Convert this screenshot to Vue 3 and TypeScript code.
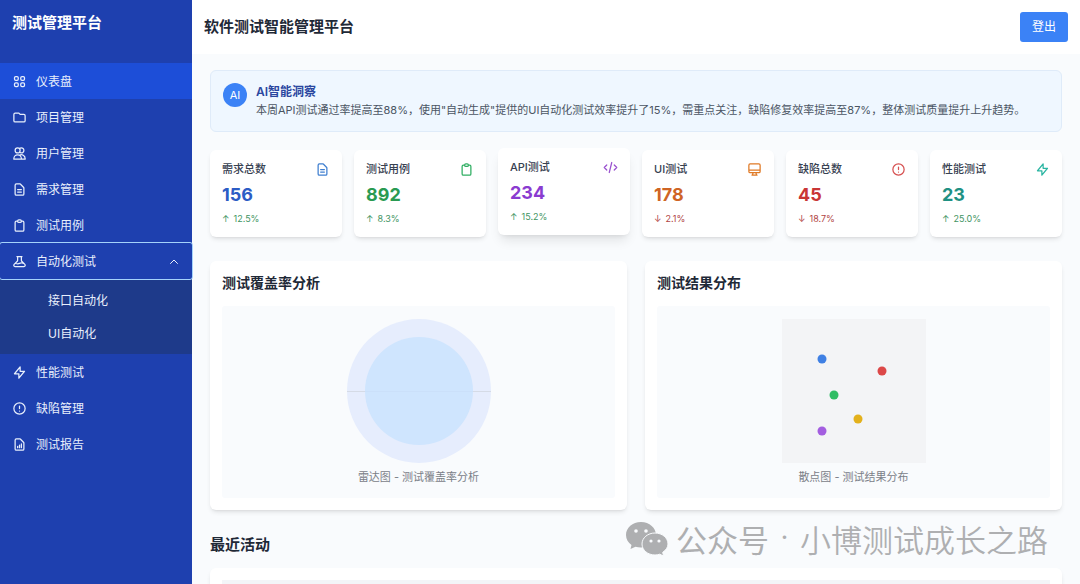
<script setup lang="ts">
interface NavItem {
  label: string
  icon: string
  active?: boolean
  children?: string[]
}

interface Stat {
  label: string
  value: string
  up: boolean
  change: string
  icon: string
  tone: string
  raised?: boolean
}

const icons: Record<string, string> = {
  grid: 'M4 6a2 2 0 012-2h2a2 2 0 012 2v2a2 2 0 01-2 2H6a2 2 0 01-2-2V6zM14 6a2 2 0 012-2h2a2 2 0 012 2v2a2 2 0 01-2 2h-2a2 2 0 01-2-2V6zM4 16a2 2 0 012-2h2a2 2 0 012 2v2a2 2 0 01-2 2H6a2 2 0 01-2-2v-2zM14 16a2 2 0 012-2h2a2 2 0 012 2v2a2 2 0 01-2 2h-2a2 2 0 01-2-2v-2z',
  folder: 'M3 7v10a2 2 0 002 2h14a2 2 0 002-2V9a2 2 0 00-2-2h-6l-2-2H5a2 2 0 00-2 2z',
  users: 'M12 4.354a4 4 0 110 5.292M15 21H3v-1a6 6 0 0112 0v1zm0 0h6v-1a6 6 0 00-9-5.197M13 7a4 4 0 11-8 0 4 4 0 018 0z',
  document: 'M9 12h6m-6 4h6m2 5H7a2 2 0 01-2-2V5a2 2 0 012-2h5.586a1 1 0 01.707.293l5.414 5.414a1 1 0 01.293.707V19a2 2 0 01-2 2z',
  clipboard: 'M9 5H7a2 2 0 00-2 2v12a2 2 0 002 2h10a2 2 0 002-2V7a2 2 0 00-2-2h-2M9 5a2 2 0 002 2h2a2 2 0 002-2M9 5a2 2 0 012-2h2a2 2 0 012 2',
  flask: 'M19.428 15.428a2 2 0 00-1.022-.547l-2.387-.477a6 6 0 00-3.86.517l-.318.158a6 6 0 01-3.86.517L6.05 15.21a2 2 0 00-1.806.547M8 4h8l-1 1v5.172a2 2 0 00.586 1.414l5 5c1.26 1.26.367 3.414-1.415 3.414H4.828c-1.782 0-2.674-2.154-1.414-3.414l5-5A2 2 0 009 10.172V5L8 4z',
  bolt: 'M13 10V3L4 14h7v7l9-11h-7z',
  alert: 'M12 8v4m0 4h.01M21 12a9 9 0 11-18 0 9 9 0 0118 0z',
  report: 'M9 17v-2m3 2v-4m3 4v-6m2 10H7a2 2 0 01-2-2V5a2 2 0 012-2h5.586a1 1 0 01.707.293l5.414 5.414a1 1 0 01.293.707V19a2 2 0 01-2 2z',
  code: 'M10 20l4-16m4 4l4 4-4 4M6 16l-4-4 4-4',
  monitor: 'M9.75 17L9 20l-1 1h8l-1-1-.75-3M3 13h18M5 17h14a2 2 0 002-2V5a2 2 0 00-2-2H5a2 2 0 00-2 2v10a2 2 0 002 2z',
}

const nav: NavItem[] = [
  { label: '仪表盘', icon: 'grid', active: true },
  { label: '项目管理', icon: 'folder' },
  { label: '用户管理', icon: 'users' },
  { label: '需求管理', icon: 'document' },
  { label: '测试用例', icon: 'clipboard' },
  { label: '自动化测试', icon: 'flask', children: ['接口自动化', 'UI自动化'] },
  { label: '性能测试', icon: 'bolt' },
  { label: '缺陷管理', icon: 'alert' },
  { label: '测试报告', icon: 'report' },
]

const stats: Stat[] = [
  { label: '需求总数', value: '156', up: true, change: '12.5%', icon: 'document', tone: 'blue' },
  { label: '测试用例', value: '892', up: true, change: '8.3%', icon: 'clipboard', tone: 'green' },
  { label: 'API测试', value: '234', up: true, change: '15.2%', icon: 'code', tone: 'purple', raised: true },
  { label: 'UI测试', value: '178', up: false, change: '2.1%', icon: 'monitor', tone: 'orange' },
  { label: '缺陷总数', value: '45', up: false, change: '18.7%', icon: 'alert', tone: 'red' },
  { label: '性能测试', value: '23', up: true, change: '25.0%', icon: 'bolt', tone: 'teal' },
]

const points = [
  { x: 40, y: 40, color: '#3f80e4' },
  { x: 100, y: 52, color: '#dc4848' },
  { x: 52, y: 76, color: '#30bd64' },
  { x: 76, y: 100, color: '#e3b11c' },
  { x: 40, y: 112, color: '#a35ee0' },
]
</script>

<template>
  <div class="app">
    <aside class="sidebar">
      <div class="brand">测试管理平台</div>
      <nav>
        <template v-for="item in nav" :key="item.label">
          <template v-if="item.children">
            <button type="button" class="nav-item nav-toggle" aria-expanded="true">
              <svg class="icon" viewBox="0 0 24 24" aria-hidden="true"><path :d="icons[item.icon]" /></svg>
              <span>{{ item.label }}</span>
              <svg class="icon chevron" viewBox="0 0 24 24" aria-hidden="true"><path d="M5 15l7-7 7 7" /></svg>
            </button>
            <div class="submenu">
              <a v-for="child in item.children" :key="child" href="#" class="sub-item">{{ child }}</a>
            </div>
          </template>
          <a v-else href="#" class="nav-item" :class="{ active: item.active }">
            <svg class="icon" viewBox="0 0 24 24" aria-hidden="true"><path :d="icons[item.icon]" /></svg>
            <span>{{ item.label }}</span>
          </a>
        </template>
      </nav>
    </aside>

    <div class="page">
      <header class="topbar">
        <h1>软件测试智能管理平台</h1>
        <button type="button" class="logout">登出</button>
      </header>

      <main class="content">
        <section class="insight">
          <div class="avatar">AI</div>
          <div class="insight-body">
            <h2>AI智能洞察</h2>
            <p>本周API测试通过率提高至88%，使用"自动生成"提供的UI自动化测试效率提升了15%，需重点关注，缺陷修复效率提高至87%，整体测试质量提升上升趋势。</p>
          </div>
        </section>

        <section class="stats">
          <article v-for="s in stats" :key="s.label" class="card stat" :class="[s.tone, { raised: s.raised }]">
            <div class="stat-head">
              <h3>{{ s.label }}</h3>
              <svg class="icon" viewBox="0 0 24 24" aria-hidden="true"><path :d="icons[s.icon]" /></svg>
            </div>
            <div class="value">{{ s.value }}</div>
            <div class="change" :class="s.up ? 'up' : 'down'">
              <span>{{ s.up ? '↑' : '↓' }}</span>
              <span>{{ s.change }}</span>
            </div>
          </article>
        </section>

        <section class="charts">
          <article class="card chart-card">
            <h2>测试覆盖率分析</h2>
            <div class="plot">
              <svg class="figure" viewBox="0 0 144 144" role="img" aria-label="雷达图">
                <circle cx="72" cy="72" r="72" fill="#e6edfd" />
                <path d="M0 72.5H144" stroke="#d5dbe6" />
                <circle cx="72" cy="72" r="54" fill="#cfe5fe" />
                <path d="M18 72.5H126" stroke="#cbe0fa" />
              </svg>
              <p>雷达图 - 测试覆盖率分析</p>
            </div>
          </article>
          <article class="card chart-card">
            <h2>测试结果分布</h2>
            <div class="plot">
              <svg class="figure" viewBox="0 0 144 144" role="img" aria-label="散点图">
                <rect width="144" height="144" fill="#f3f4f6" />
                <circle v-for="(p, i) in points" :key="i" :cx="p.x" :cy="p.y" r="4.5" :fill="p.color" />
              </svg>
              <p>散点图 - 测试结果分布</p>
            </div>
          </article>
        </section>

        <section class="recent">
          <h2>最近活动</h2>
          <div class="card recent-card">
            <div class="recent-head"></div>
          </div>
        </section>
      </main>
    </div>

    <div class="watermark">
      <svg viewBox="0 0 42 34" aria-hidden="true">
        <path d="M15 0C6.500 0 0 5.700 0 13c0 4.200 2.200 7.600 5.500 10L4.500 27l5-2.300c1.700.5 3.500.8 5.500.8 8.500 0 15-5.500 15-12.500S23.500 0 15 0z" />
        <path class="front" d="M29 11c-7.200 0-13 4.800-13 11s5.800 11 13 11c1.600 0 3.200-.3 4.700-.8L37.500 34l-.8-3.700C39.900 28.200 42 25.300 42 22c0-6.200-5.800-11-13-11z" />
        <g class="eyes">
          <circle cx="10" cy="9" r="1.800" />
          <circle cx="20" cy="9" r="1.800" />
          <circle cx="25" cy="19" r="1.600" />
          <circle cx="33" cy="19" r="1.600" />
        </g>
      </svg>
      <span class="mark-kind">公众号</span>
      <span class="mark-dot">·</span>
      <span class="mark-name">小博测试成长之路</span>
    </div>
  </div>
</template>

<style>
body {
  margin: 0;
}
</style>

<style scoped>
.app {
  position: relative;
  display: flex;
  height: 100vh;
  overflow: hidden;
  background: #f9fbfd;
  color: #1f2937;
  font-family: Inter, "Noto Sans CJK SC", sans-serif;
}
h1,
h2,
h3,
p {
  margin: 0;
}
button {
  border: 0;
  font-family: inherit;
  cursor: pointer;
}
.icon {
  width: 15px;
  height: 15px;
  flex: none;
  fill: none;
  stroke: currentColor;
  stroke-width: 2;
  stroke-linecap: round;
  stroke-linejoin: round;
}

.sidebar {
  width: 192px;
  flex: none;
  background: #1e40af;
  color: #e8effc;
}
.brand {
  padding: 12px 12px 29px;
  font-size: 15px;
  line-height: 22px;
  font-weight: 600;
  color: #fff;
}
.nav-item {
  display: flex;
  align-items: center;
  gap: 9px;
  width: 100%;
  height: 36px;
  box-sizing: border-box;
  padding: 1px 12px 0;
  background: transparent;
  color: inherit;
  font-size: 12px;
  line-height: 18px;
  text-decoration: none;
}
.nav-item.active {
  background: #1d4ed8;
}
.nav-toggle {
  position: relative;
  border-radius: 2px;
  outline: 1px solid #a5d3fb;
}
.nav-toggle .chevron {
  width: 12px;
  height: 12px;
  margin-left: auto;
}
.submenu {
  padding: 5px 0 4px;
  background: #1e3a8a;
}
.sub-item {
  display: block;
  padding: 0 12px 0 48px;
  color: inherit;
  font-size: 12px;
  line-height: 33px;
  text-decoration: none;
}

.page {
  flex: 1;
  min-width: 0;
  display: flex;
  flex-direction: column;
}
.topbar {
  display: flex;
  align-items: center;
  justify-content: space-between;
  padding: 12px;
  background: #fff;
}
.topbar h1 {
  font-size: 15px;
  line-height: 24px;
  font-weight: 600;
}
.logout {
  padding: 6px 12px;
  border-radius: 3px;
  background: #3b82f6;
  color: #fff;
  font-size: 12px;
  line-height: 18px;
}
.content {
  flex: 1;
  min-height: 0;
  padding: 16px 18px;
  overflow-y: auto;
  scrollbar-width: none;
}

.insight {
  display: flex;
  gap: 9px;
  padding: 12px;
  border: 1px solid #dfebf9;
  border-radius: 6px;
  background: #eff7ff;
}
.avatar {
  width: 24px;
  height: 24px;
  flex: none;
  border-radius: 50%;
  background: #3b82f6;
  color: #fff;
  font-size: 11px;
  line-height: 24px;
  text-align: center;
}
.insight h2 {
  color: #2b479f;
  font-size: 12px;
  line-height: 18px;
  font-weight: 600;
}
.insight p {
  color: #4b5563;
  font-size: 11px;
  line-height: 18px;
}

.card {
  border-radius: 6px;
  background: #fff;
  box-shadow: 0 3px 5px -1px rgba(0, 0, 0, 0.1), 0 2px 3px -2px rgba(0, 0, 0, 0.1);
}
.stats {
  display: grid;
  grid-template-columns: repeat(6, 1fr);
  gap: 12px;
  margin-top: 18px;
}
.stat {
  padding: 12px;
}
.stat.raised {
  transform: translateY(-2px);
  box-shadow: 0 8px 12px -3px rgba(0, 0, 0, 0.1), 0 3px 5px -3px rgba(0, 0, 0, 0.1);
}
.stat-head {
  display: flex;
  align-items: center;
  justify-content: space-between;
}
.stat h3 {
  color: #374151;
  font-size: 11px;
  line-height: 15px;
  font-weight: 500;
}
.value {
  margin: 6px 0;
  font-size: 18px;
  line-height: 24px;
  font-weight: 700;
}
.change {
  display: flex;
  gap: 4px;
  font-size: 9px;
  line-height: 12px;
}
.up {
  color: #3f9563;
}
.down {
  color: #b04444;
}
.blue .icon { color: #3f7fd0; }
.blue .value { color: #2c5cc5; }
.green .icon { color: #2fae62; }
.green .value { color: #2a9a51; }
.purple .icon { color: #9a52cf; }
.purple .value { color: #8a3bd0; }
.orange .icon { color: #e07a26; }
.orange .value { color: #cf6424; }
.red .icon { color: #d65050; }
.red .value { color: #c93535; }
.teal .icon { color: #2bb5a2; }
.teal .value { color: #1f9183; }

.charts {
  display: grid;
  grid-template-columns: repeat(2, 1fr);
  gap: 18px;
  margin-top: 24px;
}
.chart-card {
  padding: 12px;
}
.chart-card h2 {
  font-size: 14px;
  line-height: 20px;
  font-weight: 600;
}
.plot {
  display: flex;
  flex-direction: column;
  align-items: center;
  justify-content: center;
  gap: 7px;
  height: 192px;
  margin-top: 13px;
  border-radius: 3px;
  background: #f9fbfd;
}
.figure {
  width: 144px;
  height: 144px;
}
.plot p {
  color: #7b8088;
  font-size: 11px;
  line-height: 15px;
}

.recent {
  margin-top: 24px;
}
.recent h2 {
  font-size: 15px;
  line-height: 22px;
  font-weight: 600;
}
.recent-card {
  margin-top: 12px;
  padding: 12px;
}
.recent-head {
  height: 30px;
  background: #f3f5f8;
}

.watermark {
  position: absolute;
  right: 32px;
  bottom: 23px;
  display: flex;
  align-items: center;
  color: #aeafb1;
  font-size: 31px;
  line-height: 44px;
  font-family: "Noto Sans CJK SC", sans-serif;
  pointer-events: none;
}
.watermark svg {
  width: 42px;
  height: 34px;
  margin-right: 8px;
  fill: #aeafb1;
}
.watermark .front {
  stroke: #f9fbfd;
  stroke-width: 1;
}
.watermark .eyes {
  fill: #f9fbfd;
}
.mark-dot {
  width: 31px;
  font-family: Roboto, sans-serif;
  text-align: center;
}
.mark-name {
  font-weight: 350;
}
</style>
